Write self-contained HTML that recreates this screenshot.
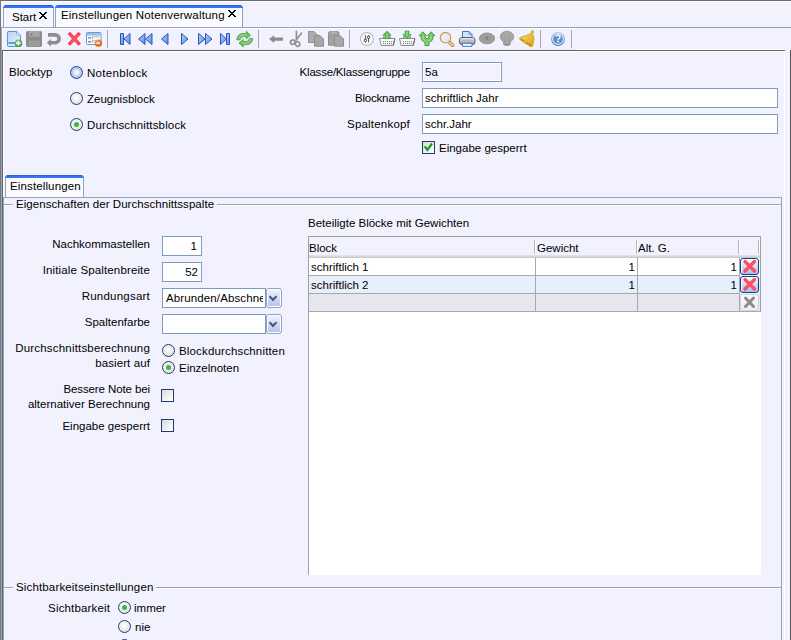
<!DOCTYPE html>
<html><head><meta charset="utf-8">
<style>
*{margin:0;padding:0;box-sizing:border-box}
html,body{width:791px;height:640px;overflow:hidden;background:#f2f2fe}
body{position:relative;font-family:"Liberation Sans",sans-serif;font-size:11.5px;line-height:13px;color:#000}
.a{position:absolute}
.t{position:absolute;white-space:nowrap;font-size:11.5px;line-height:13px}
.r{text-align:right}
.ln{position:absolute;height:1px}
.vl{position:absolute;width:1px}
.edit{position:absolute;background:#fff;border:1px solid #7c9ac2;height:20px}
.radio{position:absolute;width:13px;height:13px;border-radius:50%;border:1px solid #1f3d73;background:radial-gradient(circle at 45% 40%,#fff 0,#f4f4f4 30%,#d8d8d8 100%)}
.radio.on::after{content:"";position:absolute;left:3px;top:3px;width:5px;height:5px;border-radius:50%;background:#3cb83c}
.cb{position:absolute;width:13px;height:13px;border:1px solid #1f3d73;background:linear-gradient(135deg,#d9d9d9 0,#f6f6f6 70%,#fff 100%)}
.combo{position:absolute;width:16px;height:20px;border:1px solid #8ea4c2;border-radius:3px;background:linear-gradient(#f2f5ff,#b2c2e6);box-shadow:inset 0 0 0 1px #fff}
.combo::after{content:"";position:absolute;left:2.5px;top:4.5px;width:4px;height:4px;border-right:2px solid #46587a;border-bottom:2px solid #46587a;transform:rotate(45deg)}
.delbtn{position:absolute;width:19px;height:17px;border:1px solid #1c3d7c;border-radius:3px;background:linear-gradient(#f8faff,#a6bef0);box-shadow:inset 1px 1px 0 #fff}
.delbtn svg{position:absolute;left:-1px;top:-1px}
.delbtn.dis{border-color:#d4d4dc;background:linear-gradient(#fbfbfe,#ececf2);box-shadow:none}
.tabtop{height:3px;background:linear-gradient(#2458cc,#3274ee 45%,#3a7af2);clip-path:polygon(2px 0,calc(100% - 2px) 0,100% 2px,100% 100%,0 100%,0 2px)}
.sep{position:absolute;width:1px;height:18px;top:30px;background:#a8a8a8}
</style></head><body>
<!-- outer frame -->
<div class="ln" style="left:0;top:0;width:791px;background:#6a6a6a"></div>
<div class="ln" style="left:1px;top:1px;width:790px;background:#fff"></div>
<div class="vl" style="left:2px;top:2px;height:48px;background:#fafaff"></div>
<div class="vl" style="left:0;top:0;height:640px;background:#787878"></div>
<div class="vl" style="left:1px;top:27px;height:613px;background:#94a4bc"></div>

<!-- tab strip -->
<div class="ln" style="left:1px;top:27px;width:790px;background:#8fa5bf"></div>
<div class="a" style="left:3px;top:8px;width:51px;height:19px;background:#f6f6ff;border-left:1px solid #8fa5bf;border-right:1px solid #8fa5bf"></div><div class="a tabtop" style="left:3px;top:5px;width:51px"></div>
<div class="t" style="left:12px;top:11px">Start</div>
<div class="a" style="left:55px;top:8px;width:188px;height:19px;background:#fbfbff;border-left:1px solid #8fa5bf;border-right:1px solid #8fa5bf"></div><div class="a tabtop" style="left:55px;top:5px;width:188px"></div>
<div class="t" style="left:61px;top:9px;letter-spacing:0.18px">Einstellungen Notenverwaltung</div>
<svg class="a" style="left:0;top:0" width="250" height="27" shape-rendering="crispEdges"><g fill="#000"><rect x="39" y="12" width="2" height="1"/><rect x="45" y="12" width="2" height="1"/><rect x="40" y="13" width="2" height="1"/><rect x="44" y="13" width="2" height="1"/><rect x="41" y="14" width="4" height="1"/><rect x="42" y="15" width="2" height="1"/><rect x="41" y="16" width="4" height="1"/><rect x="40" y="17" width="2" height="1"/><rect x="44" y="17" width="2" height="1"/><rect x="39" y="18" width="2" height="1"/><rect x="45" y="18" width="2" height="1"/><rect x="228" y="10" width="2" height="1"/><rect x="234" y="10" width="2" height="1"/><rect x="229" y="11" width="2" height="1"/><rect x="233" y="11" width="2" height="1"/><rect x="230" y="12" width="4" height="1"/><rect x="231" y="13" width="2" height="1"/><rect x="230" y="14" width="4" height="1"/><rect x="229" y="15" width="2" height="1"/><rect x="233" y="15" width="2" height="1"/><rect x="228" y="16" width="2" height="1"/><rect x="234" y="16" width="2" height="1"/></g></svg>

<!-- toolbar -->
<div class="a" style="left:3px;top:28px;width:574px;height:21px;background:#f2f2fe;border-top:1px solid #fff"></div>
<div class="ln" style="left:3px;top:49px;width:574px;background:#eae8f4"></div>
<div class="ln" style="left:577px;top:49px;width:208px;background:#fff"></div>
<svg class="a" style="left:0;top:0" width="580" height="50" viewBox="0 0 580 50">
<defs>
<linearGradient id="gDoc" x1="0" y1="0" x2="1" y2="1"><stop offset="0" stop-color="#b9d3f3"/><stop offset="1" stop-color="#eef4fc"/></linearGradient>
<linearGradient id="gNav" x1="0" y1="0" x2="1" y2="1"><stop offset="0" stop-color="#b4d0f4"/><stop offset="1" stop-color="#5a90da"/></linearGradient>
<radialGradient id="gGreen" cx=".4" cy=".35" r=".7"><stop offset="0" stop-color="#9fdc8a"/><stop offset="1" stop-color="#2f8a2a"/></radialGradient>
<radialGradient id="gOrange" cx=".4" cy=".35" r=".7"><stop offset="0" stop-color="#ffb060"/><stop offset="1" stop-color="#d0500a"/></radialGradient>
<linearGradient id="gGold" x1="0" y1="0" x2="1" y2="1"><stop offset="0" stop-color="#ffe27a"/><stop offset="1" stop-color="#d89a10"/></linearGradient>
<radialGradient id="gHelp" cx=".45" cy=".4" r=".6"><stop offset="0" stop-color="#7aa8dc"/><stop offset="1" stop-color="#3a70b8"/></radialGradient>
</defs>
<!-- separators -->
<g fill="#a6a6ae"><rect x="107" y="30" width="1" height="18"/><rect x="258" y="30" width="1" height="18"/><rect x="349" y="30" width="1" height="18"/><rect x="540" y="30" width="1" height="18"/><rect x="571" y="30" width="1" height="18"/></g>
<!-- new doc -->
<path d="M7.5 32.5a1 1 0 0 1 1-1h8.2l3.8 3.8v10.2a1 1 0 0 1-1 1h-11a1 1 0 0 1-1-1z" fill="url(#gDoc)" stroke="#5a92dc" stroke-width="1"/>
<path d="M16.5 31.8v2.4a1 1 0 0 0 1 1h2.6" fill="#f4f8fe" stroke="#6aa0e4" stroke-width=".8"/>
<rect x="8.5" y="42" width="7" height="2" fill="#4aa8f0"/>
<circle cx="18.4" cy="43.3" r="3.8" fill="url(#gGreen)"/>
<path d="M18.4 41v4.6M16.1 43.3h4.6" stroke="#fff" stroke-width="1.5"/>
<!-- save disk gray -->
<rect x="26" y="31" width="16" height="16" rx="1.8" fill="#8c8c8c"/>
<rect x="28.8" y="31" width="11" height="5.8" fill="#a6a6a6"/><rect x="30.8" y="33.2" width="1.5" height="2.6" fill="#7c7c7c"/>
<rect x="28.8" y="40.8" width="11" height="5.2" fill="#a2a2a2"/>
<path d="M29.5 42.6h9.6M29.5 44.4h9.6" stroke="#8e8e8e" stroke-width=".6"/>
<!-- undo gray -->
<path d="M48 34.9H55.2A3.92 3.92 0 0 1 55.2 42.75H50.3" fill="none" stroke="#8e8e8e" stroke-width="3.6"/>
<path d="M46.9 42.75L51 38.8V46.7z" fill="#8e8e8e"/>
<!-- red X -->
<path d="M70 34.2l8.6 9.2M78.6 34.2l-8.6 9.2" stroke="#f8404f" stroke-width="3.4" stroke-linecap="square"/>
<path d="M70.5 34.8l7.6 8M78.1 34.8l-7.6 8" stroke="#ff7f8c" stroke-width="1" opacity=".7"/>
<!-- form minus -->
<rect x="86.5" y="32.5" width="14.5" height="12" rx=".8" fill="#fcfaf2" stroke="#6c9ad6"/>
<rect x="87" y="33" width="13.5" height="2.6" fill="#9cc0ec"/>
<rect x="88" y="37.2" width="3" height="1.2" fill="#4a7cd0"/><rect x="88" y="41.2" width="3" height="1.2" fill="#4a7cd0"/>
<path d="M92 36.8h7.2M92.4 36.5v2.5M92 40.8h5M92.4 40.5v2.5" stroke="#b0b0b0" stroke-width=".9"/>
<circle cx="98.4" cy="43.2" r="3.6" fill="url(#gOrange)"/>
<rect x="96.3" y="42.6" width="3.7" height="1.3" fill="#fff"/>
<!-- nav -->
<g fill="url(#gNav)" stroke="#2556c0" stroke-width="1" stroke-linejoin="round">
<rect x="120.5" y="33.5" width="3" height="11"/>
<path d="M130 33.5v11l-6-5.5z"/>
<path d="M145 33.5v11l-6.5-5.5z"/><path d="M152 33.5v11l-6.5-5.5z"/>
<path d="M168 33.5v11l-6.5-5.5z"/>
<path d="M181.5 33.5v11l6.5-5.5z"/>
<path d="M198.5 33.5v11l6.5-5.5z"/><path d="M205.5 33.5v11l6.5-5.5z"/>
<path d="M220.5 33.5v11l6-5.5z"/>
<rect x="226.5" y="33.5" width="3" height="11"/>
</g>
<!-- refresh -->
<g fill="#72c464" stroke="#3f9a38" stroke-width=".8" stroke-linejoin="round">
<path d="M236.8 39.8Q237.5 33.6 243 33.6H246.3V31.2L250.5 35.2L246.3 38.8V36.6H243.5Q240.5 36.8 240 39.8Z"/>
<path d="M252.7 38.4Q252 44.6 246.5 44.6H243.2V47L239 43L243.2 39.4V41.6H246Q249 41.4 249.5 38.4Z"/>
</g>
<path d="M238.6 38.6Q239.5 35 243 35H247M250.9 39.6Q250 43.2 246.5 43.2H242.5" fill="none" stroke="#a6dc98" stroke-width=".9"/>
<!-- back arrow gray -->
<path d="M269 39.1l5.2-3.9v2.3h8.8v3.3h-8.8v2.3z" fill="#8c8c8c"/>
<!-- scissors gray -->
<path d="M296.4 31.3v8.6M301.4 33.2l-5 6.4" stroke="#8e8e8e" stroke-width="1.7" fill="none" stroke-linecap="round"/>
<ellipse cx="292.8" cy="42.1" rx="2.4" ry="2.1" transform="rotate(-30 292.8 42.1)" fill="none" stroke="#8e8e8e" stroke-width="1.6"/>
<ellipse cx="297.6" cy="44" rx="2.1" ry="2.5" transform="rotate(-20 297.6 44)" fill="none" stroke="#8e8e8e" stroke-width="1.6"/>
<!-- copy gray -->
<path d="M308.5 31.5h5.5l3.5 3.5v7.5h-9z" fill="#acacac" stroke="#929292" stroke-width="1"/>
<path d="M314.5 35.5h5.5l3.5 3.5v7.2h-9z" fill="#a6a6a6" stroke="#8e8e8e" stroke-width="1"/>
<!-- paste gray -->
<path d="M328.5 33.5a2 2 0 0 1 2-2h6.5a2 2 0 0 1 2 2v11.7h-10.5z" fill="#a2a2a2" stroke="#8e8e8e" stroke-width="1"/>
<rect x="331" y="31.5" width="5.5" height="1.8" fill="#b8b8b8"/>
<path d="M334.5 35.5h5.5l3.5 3.5v7.2h-9z" fill="#a8a8a8" stroke="#8e8e8e" stroke-width="1"/>
<!-- sliders -->
<circle cx="366.9" cy="39" r="6.4" fill="#f6f6f6" stroke="#b4b4b4" stroke-width="1.1"/>
<circle cx="366.9" cy="39" r="5.4" fill="none" stroke="#fff" stroke-width=".8"/>
<path d="M365.4 35.2v7.4M368.5 35.2v7.2" stroke="#505050" stroke-width=".9"/>
<circle cx="365.4" cy="40.4" r="1.2" fill="#f6f6f6" stroke="#3a3a3a" stroke-width="1"/><circle cx="368.5" cy="37.3" r="1.2" fill="#f6f6f6" stroke="#3a3a3a" stroke-width="1"/>
<!-- basket up -->
<g>
<path d="M379.5 38.5h15.5l-1.6 7h-12.3z" fill="#fff" stroke="#8c8c8c" stroke-width="1"/>
<path d="M394.6 39l-1.5 6.5" stroke="#6a6a6a" stroke-width="1"/>
<rect x="383" y="41" width="1.2" height="1.2" fill="#8a8a8a"/><rect x="383" y="43" width="1.2" height="1.2" fill="#8a8a8a"/><rect x="385" y="41" width="1.2" height="1.2" fill="#8a8a8a"/><rect x="385" y="43" width="1.2" height="1.2" fill="#8a8a8a"/><rect x="387" y="41" width="1.2" height="1.2" fill="#8a8a8a"/><rect x="387" y="43" width="1.2" height="1.2" fill="#8a8a8a"/><rect x="389" y="41" width="1.2" height="1.2" fill="#8a8a8a"/><rect x="389" y="43" width="1.2" height="1.2" fill="#8a8a8a"/><rect x="391" y="41" width="1.2" height="1.2" fill="#8a8a8a"/><rect x="391" y="43" width="1.2" height="1.2" fill="#8a8a8a"/>
<rect x="383" y="36.5" width="1.6" height="1.6" fill="#5a90d8"/><rect x="389.4" y="36.5" width="1.6" height="1.6" fill="#5a90d8"/>
<path d="M387 31l4.2 4.3h-2.2v3.4h-4v-3.4h-2.2z" fill="#5cbd48" stroke="#3a9c30" stroke-width=".6" stroke-linejoin="round"/><path d="M387 33.5v4.5" stroke="#b8e6a8" stroke-width="1"/>
</g>
<g>
<path d="M399.5 38.5h15.5l-1.6 7h-12.3z" fill="#fff" stroke="#8c8c8c" stroke-width="1"/>
<path d="M414.6 39l-1.5 6.5" stroke="#6a6a6a" stroke-width="1"/>
<rect x="403" y="41" width="1.2" height="1.2" fill="#8a8a8a"/><rect x="403" y="43" width="1.2" height="1.2" fill="#8a8a8a"/><rect x="405" y="41" width="1.2" height="1.2" fill="#8a8a8a"/><rect x="405" y="43" width="1.2" height="1.2" fill="#8a8a8a"/><rect x="407" y="41" width="1.2" height="1.2" fill="#8a8a8a"/><rect x="407" y="43" width="1.2" height="1.2" fill="#8a8a8a"/><rect x="409" y="41" width="1.2" height="1.2" fill="#8a8a8a"/><rect x="409" y="43" width="1.2" height="1.2" fill="#8a8a8a"/><rect x="411" y="41" width="1.2" height="1.2" fill="#8a8a8a"/><rect x="411" y="43" width="1.2" height="1.2" fill="#8a8a8a"/>
<rect x="403" y="36.5" width="1.6" height="1.6" fill="#5a90d8"/><rect x="409.4" y="36.5" width="1.6" height="1.6" fill="#5a90d8"/>
<path d="M407 38.7l4.2-4.3h-2.2v-3.4h-4v3.4h-2.2z" fill="#5cbd48" stroke="#3a9c30" stroke-width=".6" stroke-linejoin="round"/><path d="M407 31.5v4.5" stroke="#b8e6a8" stroke-width="1"/>
</g>
<!-- fork green -->
<path d="M419.2 35.6L422.8 31.8L426.4 35.6H425.2V36.8Q425.2 38.8 427 38.8Q428.8 38.8 428.8 36.8V35.6H427.6L431.2 31.8L434.8 35.6H433V37.5Q433 41.3 429 42V45.6H425V42Q421 41.3 421 37.5V35.6Z" fill="#7cc86c" stroke="#3a9434" stroke-width=".9" stroke-linejoin="round"/>
<path d="M423 35.5v2.5q0 2.6 2.8 3.2M431 35.5v2.5q0 2.6-2.8 3.2M427 42.3v2.8" stroke="#a8e098" stroke-width="1.1" fill="none" opacity=".8"/>
<!-- magnifier -->
<path d="M448.9 41.7l3.6 3.5" stroke="#b87c40" stroke-width="3.6" stroke-linecap="round"/>
<path d="M448.9 41.7l3.6 3.5" stroke="#ecd090" stroke-width="2" stroke-linecap="round"/>
<circle cx="445.5" cy="37.7" r="5.2" fill="#e6eefa" stroke="#d49c58" stroke-width="1.3"/>
<!-- printer -->
<defs><linearGradient id="gPr" x1="0" y1="0" x2="0" y2="1"><stop offset="0" stop-color="#f4f4f4"/><stop offset=".5" stop-color="#c8c8c8"/><stop offset="1" stop-color="#8a8a8a"/></linearGradient></defs>
<path d="M462.5 31.5h6.5l3 3v4h-9.5z" fill="#d0e4fa" stroke="#3a7ad0" stroke-width="1"/>
<path d="M469 31.5v3h3" fill="none" stroke="#3a7ad0" stroke-width=".7"/>
<rect x="459.5" y="37.5" width="15.5" height="7" rx="2.5" fill="url(#gPr)" stroke="#505050" stroke-width=".9"/>
<rect x="461.5" y="39.6" width="11.5" height="2" fill="#b8b8b8"/>
<path d="M462.5 43.3h9.5v3h-9.5z" fill="#f8fbff" stroke="#3a7ad0" stroke-width="1"/>
<!-- disc gray -->
<ellipse cx="487" cy="38.4" rx="7.6" ry="5.4" fill="#a0a0a0" stroke="#8c8c8c" stroke-width=".9"/>
<ellipse cx="487" cy="38.4" rx="4.2" ry="3" fill="#989898"/>
<circle cx="487" cy="38.2" r="1" fill="#707070"/>
<!-- bulb gray -->
<path d="M507 31.3c-3.8 0-6.7 2.5-6.7 5.6 0 2.4 1.9 3.7 3.3 4.9v2.6h6.8v-2.6c1.4-1.2 3.3-2.5 3.3-4.9 0-3.1-2.9-5.6-6.7-5.6z" fill="#a6a6a6" stroke="#8e8e8e" stroke-width=".8"/>
<path d="M504.6 38.5v4.5M509.4 38.5v4.5" stroke="#969696" stroke-width=".8"/>
<rect x="504.2" y="44" width="5.6" height="1.8" rx=".8" fill="#8e8e8e"/>
<!-- bell gold -->
<path d="M531 33.3Q534.6 35 533.8 40L532.8 45.3Q532.5 47.2 530.6 46.7L519.8 39.4Q518.6 38.1 520.2 37.5L525 35.9Q529 34.6 531 33.3Z" fill="url(#gGold)" stroke="#d09a14" stroke-width=".8"/>
<path d="M520.6 38.6L531 45.9" stroke="#c48c10" stroke-width="1.4"/>
<ellipse cx="524.8" cy="42" rx="1.8" ry="1.3" transform="rotate(35 524.8 42)" fill="#f6d450" stroke="#c48c10" stroke-width=".6"/>
<circle cx="532.4" cy="32.1" r="1.4" fill="#f2c22a" stroke="#c89410" stroke-width=".6"/>
<!-- help -->
<defs><linearGradient id="gRing" x1="0" y1="0" x2="0" y2="1"><stop offset="0" stop-color="#a8c8ec"/><stop offset="1" stop-color="#3c70bc"/></linearGradient></defs>
<circle cx="558" cy="39" r="6.9" fill="url(#gRing)"/>
<circle cx="558" cy="39" r="5.4" fill="#5c8ccc" stroke="#e4eef8" stroke-width="1.1"/>
<path d="M556.2 36.8a1.9 1.8 0 1 1 3 1.5c-.7.4-1.1.7-1.1 1.5" fill="none" stroke="#fff" stroke-width="1.5"/>
<rect x="557.2" y="40.7" width="1.8" height="1.6" fill="#fff"/>
</svg>

<!-- content panel frame -->
<div class="ln" style="left:2px;top:50px;width:783px;background:#646464"></div>
<div class="vl" style="left:2px;top:50px;height:590px;background:#646464"></div>
<div class="vl" style="left:784px;top:51px;height:589px;background:#fff"></div>
<div class="vl" style="left:3px;top:51px;height:146px;background:#fff"></div>
<div class="ln" style="left:3px;top:51px;width:781px;background:#fff"></div>
<div class="vl" style="left:790px;top:50px;height:590px;background:#555"></div>

<!-- top form -->
<div class="t" style="left:9px;top:66px">Blocktyp</div>
<div class="radio" style="left:70px;top:66px;border-color:#1e4690;background:radial-gradient(circle at 50% 50%,#f4f4f0 0,#f0f0ee 28%,#bccdf2 48%,#a8bdee 100%)"></div>
<div class="t" style="left:87px;top:67px;letter-spacing:0.3px">Notenblock</div>
<div class="radio" style="left:70px;top:92px"></div>
<div class="t" style="left:87px;top:93px">Zeugnisblock</div>
<div class="radio on" style="left:70px;top:118px"></div>
<div class="t" style="left:87px;top:119px;letter-spacing:0.15px">Durchschnittsblock</div>

<div class="t r" style="right:381px;top:66px;letter-spacing:-0.2px">Klasse/Klassengruppe</div>
<div class="t r" style="right:381px;top:92px;letter-spacing:-0.2px">Blockname</div>
<div class="t r" style="right:381px;top:118px;letter-spacing:0.2px">Spaltenkopf</div>
<div class="edit" style="left:422px;top:62px;width:80px;background:#f2f2fe;box-shadow:inset 0 0 0 1px #fff"></div>
<div class="t" style="left:425px;top:66px">5a</div>
<div class="edit" style="left:422px;top:88px;width:356px"></div>
<div class="t" style="left:425px;top:92px">schriftlich Jahr</div>
<div class="edit" style="left:422px;top:114px;width:356px"></div>
<div class="t" style="left:425px;top:118px">schr.Jahr</div>
<div class="cb" style="left:422px;top:141px"><svg style="position:absolute;left:-1px;top:-1px" width="13" height="13"><path d="M3.4 6.2L5.4 8.8L9.4 3.4" fill="none" stroke="#12a012" stroke-width="2.2" stroke-linecap="square"/></svg></div>
<div class="t" style="left:439px;top:142px">Eingabe gesperrt</div>

<!-- inner tab -->
<div class="a" style="left:5px;top:178px;width:79px;height:19px;background:#fbfbff;border-left:1px solid #8fa5bf;border-right:1px solid #8fa5bf"></div><div class="a tabtop" style="left:5px;top:175px;width:79px"></div>
<div class="t" style="left:10px;top:180px;letter-spacing:0.13px">Einstellungen</div>
<!-- tab page -->
<div class="a" style="left:3px;top:197px;width:779px;height:443px;border:1px solid #8fa5bf;border-bottom:none"></div>

<!-- groupbox 1 -->
<div class="ln" style="left:4px;top:204px;width:9px;background:#a0a0a8;box-shadow:0 1px 0 #fff"></div>
<div class="t" style="left:16px;top:198px;letter-spacing:0.05px">Eigenschaften der Durchschnittsspalte</div>
<div class="ln" style="left:217px;top:204px;width:564px;background:#a0a0a8;box-shadow:0 1px 0 #fff"></div>

<!-- left column -->
<div class="t r" style="right:641px;top:238px">Nachkommastellen</div>
<div class="t r" style="right:641px;top:264px;letter-spacing:0.14px">Initiale Spaltenbreite</div>
<div class="t r" style="right:641px;top:290px;letter-spacing:0.22px">Rundungsart</div>
<div class="t r" style="right:641px;top:316px">Spaltenfarbe</div>
<div class="t r" style="right:641px;top:342px;letter-spacing:0.19px">Durchschnittsberechnung</div>
<div class="t r" style="right:641px;top:357px;letter-spacing:0.1px">basiert auf</div>
<div class="t r" style="right:641px;top:383px;letter-spacing:-0.1px">Bessere Note bei</div>
<div class="t r" style="right:641px;top:398px">alternativer Berechnung</div>
<div class="t r" style="right:641px;top:420px">Eingabe gesperrt</div>

<div class="edit" style="left:162px;top:236px;width:40px"></div>
<div class="t r" style="right:594px;top:240px">1</div>
<div class="edit" style="left:162px;top:262px;width:40px"></div>
<div class="t r" style="right:593px;top:266px">52</div>
<div class="edit" style="left:162px;top:288px;width:104px"><div class="a" style="left:0;top:0;width:100px;height:18px;overflow:hidden"><div class="t" style="left:3px;top:3px;letter-spacing:.12px">Abrunden/Abschneiden</div></div></div>
<div class="combo" style="left:266px;top:288px"></div>
<div class="edit" style="left:162px;top:314px;width:104px"></div>
<div class="combo" style="left:266px;top:314px"></div>

<div class="radio" style="left:162px;top:344px"></div>
<div class="t" style="left:179px;top:345px;letter-spacing:0.16px">Blockdurchschnitten</div>
<div class="radio on" style="left:162px;top:361px"></div>
<div class="t" style="left:179px;top:362px">Einzelnoten</div>
<div class="cb" style="left:161px;top:389px"></div>
<div class="cb" style="left:161px;top:419px"></div>

<!-- grid -->
<div class="t" style="left:308px;top:217px">Beteiligte Blöcke mit Gewichten</div>
<div class="a" style="left:308px;top:236px;width:453px;height:339px;background:#fff;border-left:1px solid #a0a0a0"></div>
<div class="a" style="left:308px;top:236px;width:453px;height:76px;border:1px solid #a0a0a0;border-bottom:none;background:#f2f2fe"></div>
<div class="a" style="left:309px;top:255px;width:451px;height:3px;background:linear-gradient(#e6e6ee,#c4c4cc)"></div>
<div class="vl" style="left:534px;top:240px;height:14px;background:#b4b4bc;box-shadow:1px 0 0 #fff"></div>
<div class="vl" style="left:636px;top:240px;height:14px;background:#b4b4bc;box-shadow:1px 0 0 #fff"></div>
<div class="vl" style="left:738px;top:240px;height:14px;background:#b4b4bc;box-shadow:1px 0 0 #fff"></div>
<div class="vl" style="left:758px;top:240px;height:14px;background:#b4b4bc;box-shadow:1px 0 0 #fff"></div>
<div class="t" style="left:309px;top:242px">Block</div>
<div class="t" style="left:537px;top:242px">Gewicht</div>
<div class="t" style="left:638px;top:242px">Alt. G.</div>
<!-- rows -->
<div class="a" style="left:309px;top:258px;width:451px;height:17px;background:#fff"></div>
<div class="a" style="left:309px;top:276px;width:451px;height:17px;background:#e8effc"></div>
<div class="a" style="left:309px;top:294px;width:451px;height:17px;background:#e6e6ee"></div>
<div class="ln" style="left:309px;top:275px;width:430px;background:#a8a8a8"></div>
<div class="ln" style="left:309px;top:293px;width:430px;background:#a8a8a8"></div>
<div class="ln" style="left:309px;top:311px;width:451px;background:#a8a8a8"></div>
<div class="vl" style="left:535px;top:258px;height:53px;background:#a8a8a8"></div>
<div class="vl" style="left:637px;top:258px;height:53px;background:#a8a8a8"></div>
<div class="vl" style="left:739px;top:258px;height:53px;background:#a8a8a8"></div>
<div class="t" style="left:311px;top:261px">schriftlich 1</div>
<div class="t r" style="right:156px;top:261px">1</div>
<div class="t r" style="right:54px;top:261px">1</div>
<div class="t" style="left:311px;top:279px">schriftlich 2</div>
<div class="t r" style="right:156px;top:279px">1</div>
<div class="t r" style="right:54px;top:279px">1</div>
<div class="delbtn" style="left:740px;top:258px"><svg width="19" height="17"><path d="M5 3.5L14.5 13M14.5 3.5L5 13" stroke="#ff4454" stroke-width="3.2" stroke-linecap="round"/><path d="M5 3.5L14.5 13M14.5 3.5L5 13" stroke="#ff8a96" stroke-width="1" stroke-linecap="round" opacity=".5"/></svg></div>
<div class="delbtn" style="left:740px;top:276px"><svg width="19" height="17"><path d="M5 3.5L14.5 13M14.5 3.5L5 13" stroke="#ff4454" stroke-width="3.2" stroke-linecap="round"/><path d="M5 3.5L14.5 13M14.5 3.5L5 13" stroke="#ff8a96" stroke-width="1" stroke-linecap="round" opacity=".5"/></svg></div>
<div class="delbtn dis" style="left:740px;top:294px"><svg width="19" height="17"><path d="M5.5 4L13.5 12.5M13.5 4L5.5 12.5" stroke="#8c8c8c" stroke-width="3" stroke-linecap="round"/></svg></div>

<!-- groupbox 2 -->
<div class="ln" style="left:4px;top:587px;width:9px;background:#a0a0a8;box-shadow:0 1px 0 #fff"></div>
<div class="t" style="left:16px;top:581px;letter-spacing:0.15px">Sichtbarkeitseinstellungen</div>
<div class="ln" style="left:156px;top:587px;width:625px;background:#a0a0a8;box-shadow:0 1px 0 #fff"></div>
<div class="t r" style="right:681px;top:602px;letter-spacing:0.15px">Sichtbarkeit</div>
<div class="radio on" style="left:118px;top:601px"></div>
<div class="t" style="left:134px;top:602px">immer</div>
<div class="radio" style="left:118px;top:620px"></div>
<div class="t" style="left:135px;top:621px">nie</div>
<div class="radio" style="left:118px;top:639px"></div>

</body></html>
